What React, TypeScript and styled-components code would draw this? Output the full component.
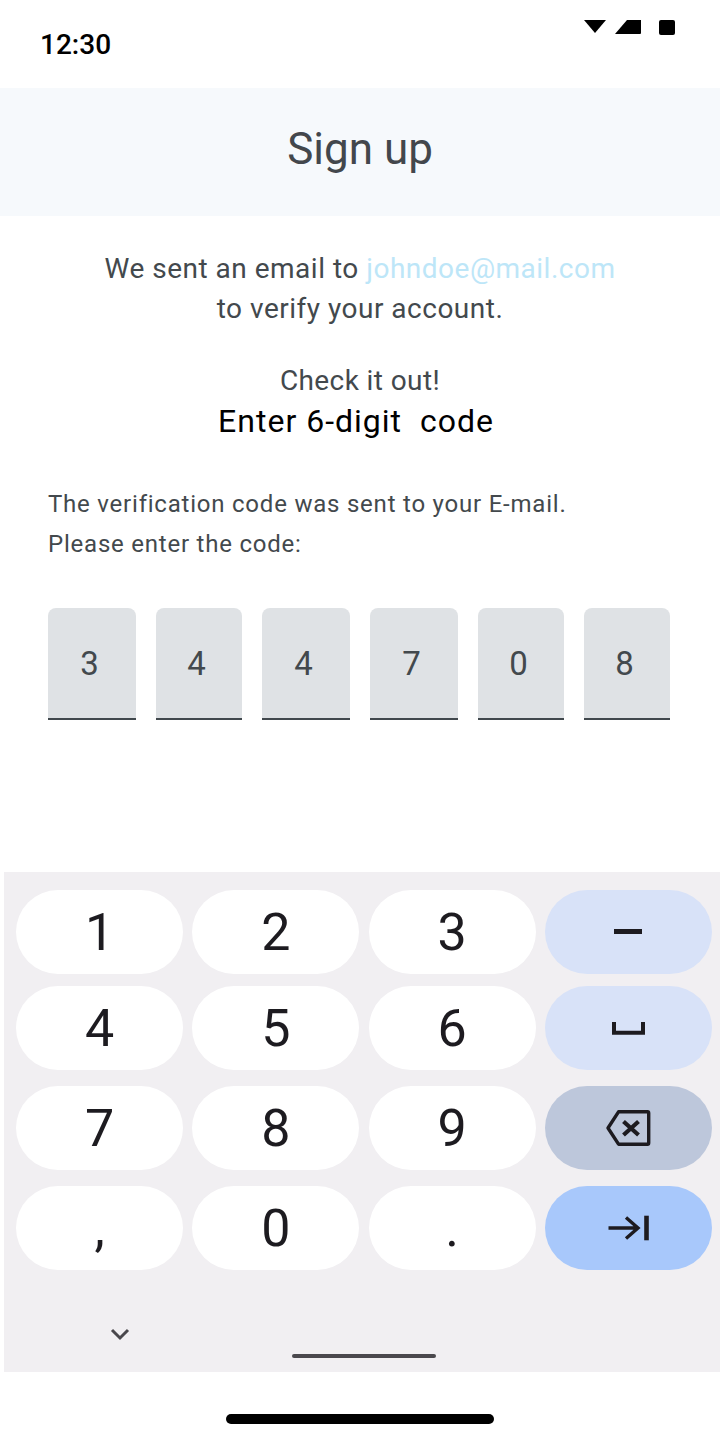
import React from "react";
import styled, { createGlobalStyle } from "styled-components";

const GlobalStyle = createGlobalStyle`
  html, body {
    margin: 0;
    padding: 0;
    background: #fff;
  }
  * {
    box-sizing: border-box;
  }
`;

const Page = styled.div`
  width: 720px;
  height: 1440px;
  display: flex;
  flex-direction: column;
  background: #fff;
  font-family: Roboto, "Noto Sans", sans-serif;
  overflow: hidden;
`;

const StatusBar = styled.div`
  height: 88px;
  padding: 0 44px 0 40px;
  display: flex;
  justify-content: space-between;
  align-items: flex-start;
`;

const Clock = styled.span`
  margin-top: 28px;
  font-size: 28px;
  line-height: 34px;
  font-weight: 500;
  color: #000;
`;

const StatusIcons = styled.svg`
  margin-top: 19px;
  display: block;
`;

const Header = styled.header`
  height: 128px;
  padding-bottom: 6px;
  background: #f6f9fc;
  display: flex;
  align-items: center;
  justify-content: center;
  font-size: 44px;
  color: #43474c;
`;

const Content = styled.main`
  flex: 1;
  display: flex;
  flex-direction: column;
`;

const Intro = styled.p`
  margin: 33px 0 0;
  text-align: center;
  font-size: 28px;
  line-height: 40px;
  letter-spacing: 0.5px;
  color: #43494d;
`;

const Mail = styled.span`
  color: #bde6f8;
`;

const CheckText = styled.p`
  margin: 32px 0 0;
  text-align: center;
  font-size: 28px;
  line-height: 39px;
  letter-spacing: 0.4px;
  color: #43494d;
`;

const EnterCode = styled.h2`
  margin: 0;
  padding-right: 8px;
  text-align: center;
  font-size: 32px;
  line-height: 42px;
  font-weight: 400;
  letter-spacing: 1px;
  white-space: pre;
  color: #000;
`;

const Hint = styled.p`
  margin: 42px 0 0;
  padding-left: 48px;
  font-size: 24px;
  line-height: 40px;
  letter-spacing: 0.78px;
  color: #43494d;
`;

const CodeRow = styled.div`
  margin-top: 44px;
  padding-left: 48px;
  display: flex;
`;

const CodeCell = styled.div<{ $width: number; $gap: number }>`
  width: ${(p) => p.$width}px;
  margin-right: ${(p) => p.$gap}px;
  height: 112px;
  padding-right: 5px;
  display: flex;
  align-items: center;
  justify-content: center;
  background: #dfe2e5;
  border-bottom: 2px solid #41484d;
  border-radius: 8px 8px 0 0;
  font-size: 33px;
  color: #43494d;
`;

const Keyboard = styled.section`
  height: 500px;
  margin-left: 4px;
  padding: 18px 8px 0 12px;
  background: #f1eff2;
  display: flex;
  flex-direction: column;
`;

const KeyRow = styled.div<{ $top: number }>`
  margin-top: ${(p) => p.$top}px;
  display: grid;
  grid-template-columns: repeat(4, 167px);
  column-gap: 9.33px;
`;

const Key = styled.div<{ $bg?: string }>`
  height: 84px;
  border-radius: 42px;
  background: ${(p) => p.$bg || "#fff"};
  display: flex;
  align-items: center;
  justify-content: center;
  font-size: 52px;
  color: #1d1b20;
`;

const KeyboardFoot = styled.div`
  flex: 1;
  display: flex;
  flex-direction: column;
  align-items: center;
`;

const Chevron = styled.svg`
  display: block;
  margin: 58px 0 0 -488px;
`;

const Handle = styled.div`
  width: 144px;
  height: 4px;
  margin: 12px 0 0 0;
  border-radius: 2px;
  background: #4a484d;
`;

const NavArea = styled.div`
  height: 68px;
  display: flex;
  justify-content: center;
  padding: 42px 0 0 0;
`;

const NavBar = styled.div`
  width: 268px;
  height: 10px;
  border-radius: 5px;
  background: #000;
`;

const cells = [
  { v: "3", w: 88, g: 20 },
  { v: "4", w: 86, g: 20 },
  { v: "4", w: 88, g: 20 },
  { v: "7", w: 88, g: 20 },
  { v: "0", w: 86, g: 20 },
  { v: "8", w: 86, g: 0 },
];

const MinusIcon = () => (
  <svg width="28" height="6" viewBox="0 0 28 6">
    <rect y="0" width="28" height="5" fill="#1d1b20" />
  </svg>
);

const SpaceIcon = () => (
  <svg width="33" height="13" viewBox="0 0 33 13" fill="none">
    <path d="M2 0v10.8h29V0" stroke="#1d1b20" strokeWidth="4" />
  </svg>
);

const BackspaceIcon = () => (
  <svg width="46" height="38" viewBox="0 0 46 38" fill="none" stroke="#1d1b20">
    <path
      d="M13.5 2.8h29a1.2 1.2 0 0 1 1.2 1.2v30a1.2 1.2 0 0 1-1.2 1.2h-29L3 19Z"
      strokeWidth="3.4"
      strokeLinejoin="round"
    />
    <path d="M18.5 12.5l15 13.5M33.5 12.5L18.5 26" strokeWidth="4.2" />
  </svg>
);

const TabIcon = () => (
  <svg width="42" height="26" viewBox="0 0 42 26" fill="none" stroke="#1d1b20">
    <path d="M1.5 13H31M19 2.5L31 13 19 23.5" strokeWidth="3.4" />
    <path d="M39.5 .7v24.6" strokeWidth="4.6" />
  </svg>
);

const App = () => (
  <Page>
    <GlobalStyle />
    <StatusBar>
      <Clock>12:30</Clock>
      <StatusIcons width="92" height="16" viewBox="0 0 92 16">
        <path d="M0 1h22L11 14Z" fill="#000" />
        <path d="M31 15L43 1h14v13a1 1 0 0 1-1 1Z" fill="#000" />
        <rect x="75" y="1" width="16" height="15" rx="2" fill="#000" />
      </StatusIcons>
    </StatusBar>
    <Header>Sign up</Header>
    <Content>
      <Intro>
        We sent an email to <Mail>johndoe@mail.com</Mail>
        <br />
        to verify your account.
      </Intro>
      <CheckText>Check it out!</CheckText>
      <EnterCode>{"Enter 6-digit  code"}</EnterCode>
      <Hint>
        The verification code was sent to your E-mail.
        <br />
        Please enter the code:
      </Hint>
      <CodeRow>
        {cells.map((c, i) => (
          <CodeCell key={i} $width={c.w} $gap={c.g}>
            {c.v}
          </CodeCell>
        ))}
      </CodeRow>
    </Content>
    <Keyboard>
      <KeyRow $top={0}>
        <Key>1</Key>
        <Key>2</Key>
        <Key>3</Key>
        <Key $bg="#d8e2f8">
          <MinusIcon />
        </Key>
      </KeyRow>
      <KeyRow $top={12}>
        <Key>4</Key>
        <Key>5</Key>
        <Key>6</Key>
        <Key $bg="#d8e2f8">
          <SpaceIcon />
        </Key>
      </KeyRow>
      <KeyRow $top={16}>
        <Key>7</Key>
        <Key>8</Key>
        <Key>9</Key>
        <Key $bg="#bdc7db">
          <BackspaceIcon />
        </Key>
      </KeyRow>
      <KeyRow $top={16}>
        <Key>,</Key>
        <Key>0</Key>
        <Key>.</Key>
        <Key $bg="#a8c8fb">
          <TabIcon />
        </Key>
      </KeyRow>
      <KeyboardFoot>
        <Chevron width="20" height="14" viewBox="0 0 20 14" fill="none">
          <path d="M2 2l8 8 8-8" stroke="#49474c" strokeWidth="3" />
        </Chevron>
        <Handle />
      </KeyboardFoot>
    </Keyboard>
    <NavArea>
      <NavBar />
    </NavArea>
  </Page>
);

export default App;
